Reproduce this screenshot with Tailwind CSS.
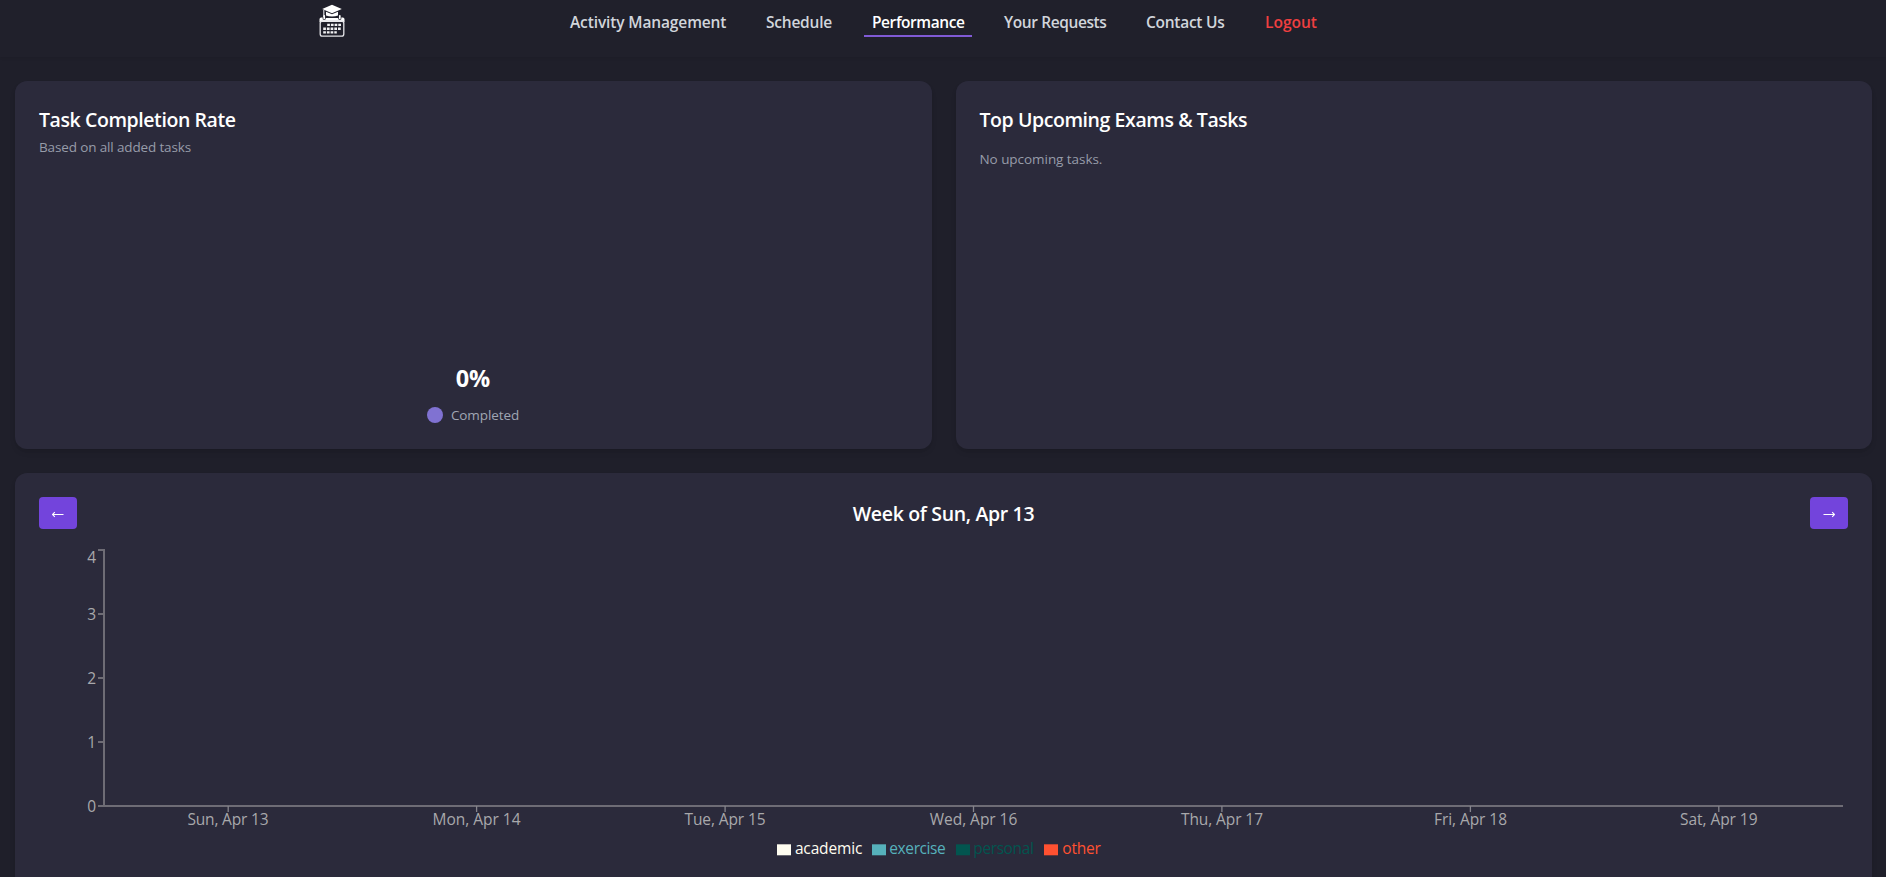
<!DOCTYPE html>
<html lang="en">
<head>
<meta charset="utf-8">
<title>Performance</title>
<script src="https://cdn.jsdelivr.net/npm/@tailwindcss/browser@4"></script>
</head>
<body class="h-[877px] overflow-hidden bg-[#1f1f2a] text-white font-['Open_Sans',sans-serif]">
<header class="flex h-[57px] items-start bg-[#20202b] pl-[319px] shadow-[0_1px_3px_rgba(0,0,0,0.08)]">
  <svg class="mt-1 h-[34px] w-[26px] shrink-0" viewBox="0 0 26 34" fill="none">
    <path d="M13 .8 22.800 5 13 9.300 3.200 5Z" fill="#fff"/>
    <path d="M7 7.800v3.800c3.500 1.200 8.500 1.200 12 0V7.800L13 10.300Z" fill="#fff"/>
    <path d="M4.800 6v7" stroke="#d8d8dc" stroke-width="1.200"/>
    <path d="M.5 15.200q0-1.700 1.700-1.700h1.500v1.800q1.500 1.200 3 0v-1.200h12.600v1.200q1.500 1.200 3 0v-1.800h1.500q1.700 0 1.700 1.700v2.800H.5Z" fill="#fff"/>
    <path d="M5.200 11.800v2.600M20.800 11.800v2.600" stroke="#fff" stroke-width="1.700" stroke-linecap="round"/>
    <rect x="1.200" y="17" width="23.600" height="15.200" rx="2.200" stroke="#e4e4e8" stroke-width="1.300"/>
    <path d="M8.200 20.900H22M4.200 24.700H22M4.200 28.400h13.600" stroke="#f1f1f3" stroke-width="2.400" stroke-dasharray="2.700 1"/>
  </svg>
  <nav class="ml-[217px] flex gap-6 text-[15.5px] leading-6 font-semibold text-[#d1d5db] whitespace-nowrap">
    <a class="mt-[9.5px] w-[172px] px-2 tracking-[-0.13px]">Activity Management</a>
    <a class="mt-[9.5px] w-[82px] px-2 tracking-[-0.218px]">Schedule</a>
    <a class="mt-[9.5px] h-[27.5px] w-[108px] border-b-2 border-[#805ad5] px-2 tracking-[-0.424px] text-white">Performance</a>
    <a class="mt-[9.5px] w-[118px] px-2 tracking-[-0.398px]">Your Requests</a>
    <a class="mt-[9.5px] w-[95px] px-2 tracking-[-0.266px]">Contact Us</a>
    <a class="mt-[9.5px] px-2 text-[#ef3f40]">Logout</a>
  </nav>
</header>

<main class="flex flex-col gap-6 pt-6 pr-[14px] pl-[15px]">
  <div class="grid h-[368px] grid-cols-[917px_916px] gap-6">
    <section class="flex flex-col rounded-xl bg-[#2b2a3b] p-6 shadow-md">
      <h2 class="text-[19.5px] leading-[30px] font-semibold tracking-[-0.42px]">Task Completion Rate</h2>
      <p class="mt-px text-[13.5px] leading-[22px] tracking-[-0.141px] text-[#979ca9]">Based on all added tasks</p>
      <div class="mt-auto flex flex-col items-center pr-px">
        <span class="text-[23.5px] leading-9 font-bold">0%</span>
        <span class="mt-[7px] -mb-[2px] flex h-6 items-center gap-2 text-[13.5px] tracking-[-0.09px] text-[#a0a6b3]"><i class="size-4 rounded-full bg-[#8072d2]"></i>Completed</span>
      </div>
    </section>
    <section class="rounded-xl bg-[#2b2a3b] py-6 pl-[23.5px] shadow-md">
      <h2 class="text-[19.5px] leading-[30px] font-semibold tracking-[-0.425px]">Top Upcoming Exams &amp; Tasks</h2>
      <p class="mt-[13px] text-[13.5px] leading-[22px] tracking-[-0.05px] text-[#979ca9]">No upcoming tasks.</p>
    </section>
  </div>

  <section class="h-[440px] rounded-xl bg-[#2b2a3b] p-6 shadow-md">
    <div class="flex h-8 items-center justify-between">
      <button class="flex h-8 w-[38px] items-center justify-center rounded bg-[#7344dc]" aria-label="Previous week">
        <svg class="mt-[3px] h-[7px] w-[12px]" viewBox="0 0 12 7" fill="none" stroke="#fff"><path d="M.5 3.500h11M2.800 1.200.500 3.500l2.300 2.300" stroke-width="1.100"/></svg>
      </button>
      <h2 class="pt-[2px] text-[19.5px] leading-[30px] font-semibold tracking-[-0.334px]">Week of Sun, Apr 13</h2>
      <button class="flex h-8 w-[38px] items-center justify-center rounded bg-[#7344dc]" aria-label="Next week">
        <svg class="mt-[3px] h-[7px] w-[12px]" viewBox="0 0 12 7" fill="none" stroke="#fff"><path d="M.5 3.500h11M9.200 1.200l2.300 2.300-2.300 2.300" stroke-width="1.100"/></svg>
      </button>
    </div>
    <svg class="mt-4 h-[320px] w-[1809px] text-[15.5px]" viewBox="39 545 1809 320">
      <g stroke="#6e6c75" stroke-width="2" fill="none">
        <path d="M104 549V806M98 806H1843"/>
        <path d="M98 550h6M98 614h6M98 678h6M98 742h6"/>
      </g>
      <path d="M228.200 806v6M476.600 806v6M725.100 806v6M973.500 806v6M1221.900 806v6M1470.400 806v6M1718.800 806v6" stroke="#85848c" stroke-width="1.300"/>
      <g fill="#a8a8ab" text-anchor="end">
        <text x="96" y="563">4</text><text x="96" y="620">3</text><text x="96" y="684">2</text><text x="96" y="748">1</text><text x="96" y="812">0</text>
      </g>
      <g fill="#a8a8ab">
        <text x="187.500" y="825" textLength="81">Sun, Apr 13</text>
        <text x="432.500" y="825" textLength="88">Mon, Apr 14</text>
        <text x="684.500" y="825" textLength="81">Tue, Apr 15</text>
        <text x="929.800" y="825" textLength="87.500">Wed, Apr 16</text>
        <text x="1181" y="825" textLength="82">Thu, Apr 17</text>
        <text x="1434" y="825" textLength="73">Fri, Apr 18</text>
        <text x="1680" y="825" textLength="77.500">Sat, Apr 19</text>
      </g>
      <path d="M777 844.300h14v11h-14z" fill="#fffdf0"/><text x="794.900" y="854" textLength="67.500" fill="#fffdf0">academic</text>
      <path d="M872 844.300h14v11h-14z" fill="#56b1bb"/><text x="889.300" y="854" textLength="56.500" fill="#56b1bb">exercise</text>
      <path d="M956 844.300h14v11h-14z" fill="#02554f"/><text x="973.300" y="854" textLength="60.500" fill="#02554f">personal</text>
      <path d="M1044 844.300h14v11h-14z" fill="#ff5131"/><text x="1062.300" y="854" textLength="38.500" fill="#ff5131">other</text>
    </svg>
  </section>
</main>
</body>
</html>
